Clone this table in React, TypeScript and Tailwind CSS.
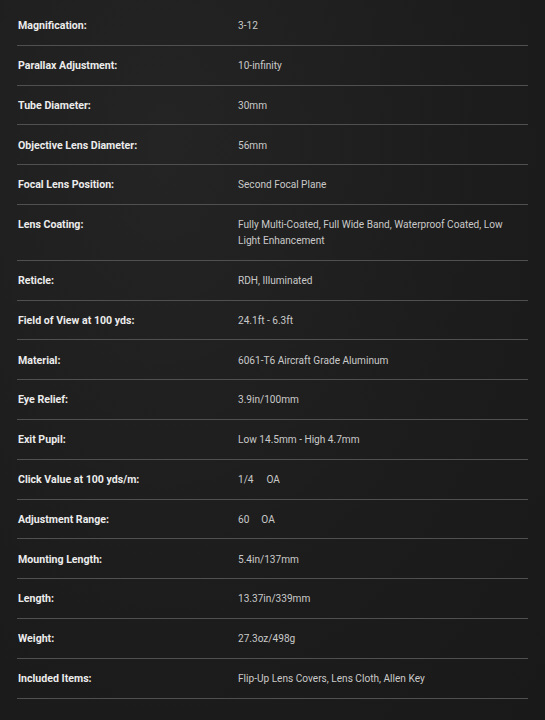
import React from "react";

type Row = { label: string; value: React.ReactNode };

const rows: Row[] = [
  { label: "Magnification:", value: "3-12" },
  { label: "Parallax Adjustment:", value: "10-infinity" },
  { label: "Tube Diameter:", value: "30mm" },
  { label: "Objective Lens Diameter:", value: "56mm" },
  { label: "Focal Lens Position:", value: "Second Focal Plane" },
  {
    label: "Lens Coating:",
    value: "Fully Multi-Coated, Full Wide Band, Waterproof Coated, Low Light Enhancement",
  },
  { label: "Reticle:", value: "RDH, Illuminated" },
  { label: "Field of View at 100 yds:", value: "24.1ft - 6.3ft" },
  { label: "Material:", value: "6061-T6 Aircraft Grade Aluminum" },
  { label: "Eye Relief:", value: "3.9in/100mm" },
  { label: "Exit Pupil:", value: "Low 14.5mm - High 4.7mm" },
  {
    label: "Click Value at 100 yds/m:",
    value: (
      <>
        <span>1/4</span>
        <span className="ml-[13px]">OA</span>
      </>
    ),
  },
  {
    label: "Adjustment Range:",
    value: (
      <>
        <span>60</span>
        <span className="ml-[12px]">OA</span>
      </>
    ),
  },
  { label: "Mounting Length:", value: "5.4in/137mm" },
  { label: "Length:", value: "13.37in/339mm" },
  { label: "Weight:", value: "27.3oz/498g" },
  { label: "Included Items:", value: "Flip-Up Lens Covers, Lens Cloth, Allen Key" },
];

export default function App() {
  return (
    <div
      className="w-[545px] h-[720px] overflow-hidden bg-[#1d1d1d] bg-[radial-gradient(ellipse_at_30%_20%,#242424_0%,#1c1c1c_60%,#191919_100%)] px-[17px] pt-[6px]"
      style={{ fontFamily: "Roboto, 'Liberation Sans', sans-serif" }}
    >
      <div className="flex flex-col">
        {rows.map((r, i) => (
          <div
            key={i}
            className="flex border-b border-[#505050] pt-[12.3px] pb-[10.5px]"
          >
            <div className="w-[221px] shrink-0 pl-[1px] text-[10.6px] leading-[16px] font-bold text-[#ececec]">
              {r.label}
            </div>
            <div className="flex-1 pr-[16px] text-[10.1px] leading-[16px] text-[#c9c9c9]">
              {r.value}
            </div>
          </div>
        ))}
      </div>
    </div>
  );
}
